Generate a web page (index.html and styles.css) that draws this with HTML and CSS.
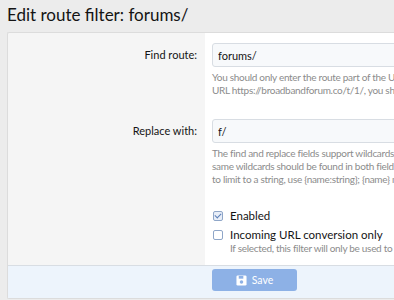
FILE: index.html
```html
<!DOCTYPE html>
<html lang="en">
  <head>
    <meta charset="UTF-8" />
    <meta name="viewport" content="width=device-width, initial-scale=1.0" />
    <title>Edit route filter</title>
    <link rel="stylesheet" href="styles.css">
  </head>
  <body>
    <h1 class="title">Edit route filter: forums/</h1>
    <form class="block">
      <div class="row">
        <div class="row-label"><label for="find">Find route:</label></div>
        <div class="row-field">
          <input type="text" id="find" class="input" value="forums/" />
          <p class="hint">You should only enter the route part of the URL. For example, to change the<br />URL https://broadbandforum.co/t/1/, you should only enter t/1/</p>
        </div>
      </div>
      <div class="row">
        <div class="row-label"><label for="replace">Replace with:</label></div>
        <div class="row-field">
          <input type="text" id="replace" class="input" value="f/" />
          <p class="hint">The find and replace fields support wildcards in the form of {name}. The<br />same wildcards should be found in both fields. If you want the wildcard<br />to limit to a string, use {name:string}; {name} matches an integer.</p>
        </div>
      </div>
      <div class="row row-checks">
        <div class="row-label"></div>
        <div class="row-field">
          <label class="check"><span class="box checked"></span>Enabled</label>
          <label class="check"><span class="box"></span>Incoming URL conversion only</label>
          <p class="hint check-hint">If selected, this filter will only be used to convert incoming URLs.</p>
        </div>
      </div>
      <div class="footer">
        <div class="footer-space"></div>
        <button type="button" class="btn">
          <svg width="11" height="11" viewBox="0 0 12 12"><rect x="0.5" y="0.5" width="11" height="11" rx="1.5" fill="#fff"/><rect x="3" y="1" width="5" height="3" fill="#8db1e6"/><circle cx="6" cy="7.7" r="1.9" fill="#8db1e6"/></svg>
          Save
        </button>
      </div>
    </form>
  </body>
</html>
```

FILE: styles.css
```css
* {
  box-sizing: border-box;
  margin: 0;
  padding: 0;
}
body {
  background-color: #ececec;
  font-family: Lato, "Noto Sans", sans-serif;
  color: #141414;
  padding: 0 0 0 7px;
  overflow: hidden;
}
.title {
  font-size: 17px;
  font-weight: 400;
  line-height: 24px;
  padding-top: 3px;
  height: 32px;
  color: #141414;
}
.block {
  background-color: #f5f5f5;
  border: 1px solid #dcdcdc;
  border-right: none;
  border-radius: 2px 0 0 2px;
  width: 400px;
}
.row {
  display: flex;
}
.row-label {
  width: 197px;
  flex-shrink: 0;
  text-align: right;
  padding: 14px 8px 0 0;
  font-size: 11px;
  color: #141414;
}
.row-label label {
  line-height: 16px;
}
.row-field {
  flex: 1;
  background-color: #fff;
  padding: 10px 0 12px 7px;
}
.input {
  display: block;
  width: 300px;
  height: 24px;
  border: 1px solid #d8dde3;
  border-radius: 3px;
  background-color: #f7f9fb;
  font-family: inherit;
  font-size: 11px;
  color: #141414;
  padding: 0 5px;
}
.hint {
  font-size: 10px;
  letter-spacing: -0.3px;
  line-height: 13px;
  color: #8c8c8c;
  white-space: nowrap;
  padding-top: 4px;
}
.row-checks .row-field {
  padding-top: 8px;
  padding-bottom: 10px;
}
.check {
  display: flex;
  align-items: center;
  font-size: 11.5px;
  line-height: 19px;
  color: #141414;
}
.box {
  width: 10px;
  height: 10px;
  border: 1px solid #8fa6c8;
  border-radius: 2px;
  background: #fff;
  margin: 0 7px 0 1px;
  position: relative;
}
.box.checked {
  background: #e8eef8;
}
.box.checked::after {
  content: "";
  position: absolute;
  left: 2px;
  top: 0px;
  width: 3px;
  height: 5px;
  border: solid #5b7fb8;
  border-width: 0 1.2px 1.2px 0;
  transform: rotate(45deg);
}
.check-hint {
  padding: 0 0 0 18px;
  margin-top: -2px;
}
.footer {
  display: flex;
  background-color: #edf4fc;
  border-top: 1px solid #d8dde3;
  padding: 3px 0 7px;
}
.footer-space {
  width: 204px;
  flex-shrink: 0;
}
.btn {
  display: flex;
  align-items: center;
  justify-content: center;
  gap: 5px;
  width: 85px;
  height: 22px;
  border: none;
  border-radius: 3px;
  background-color: #8db1e6;
  color: #fff;
  font-family: inherit;
  font-size: 10.5px;
}
```
